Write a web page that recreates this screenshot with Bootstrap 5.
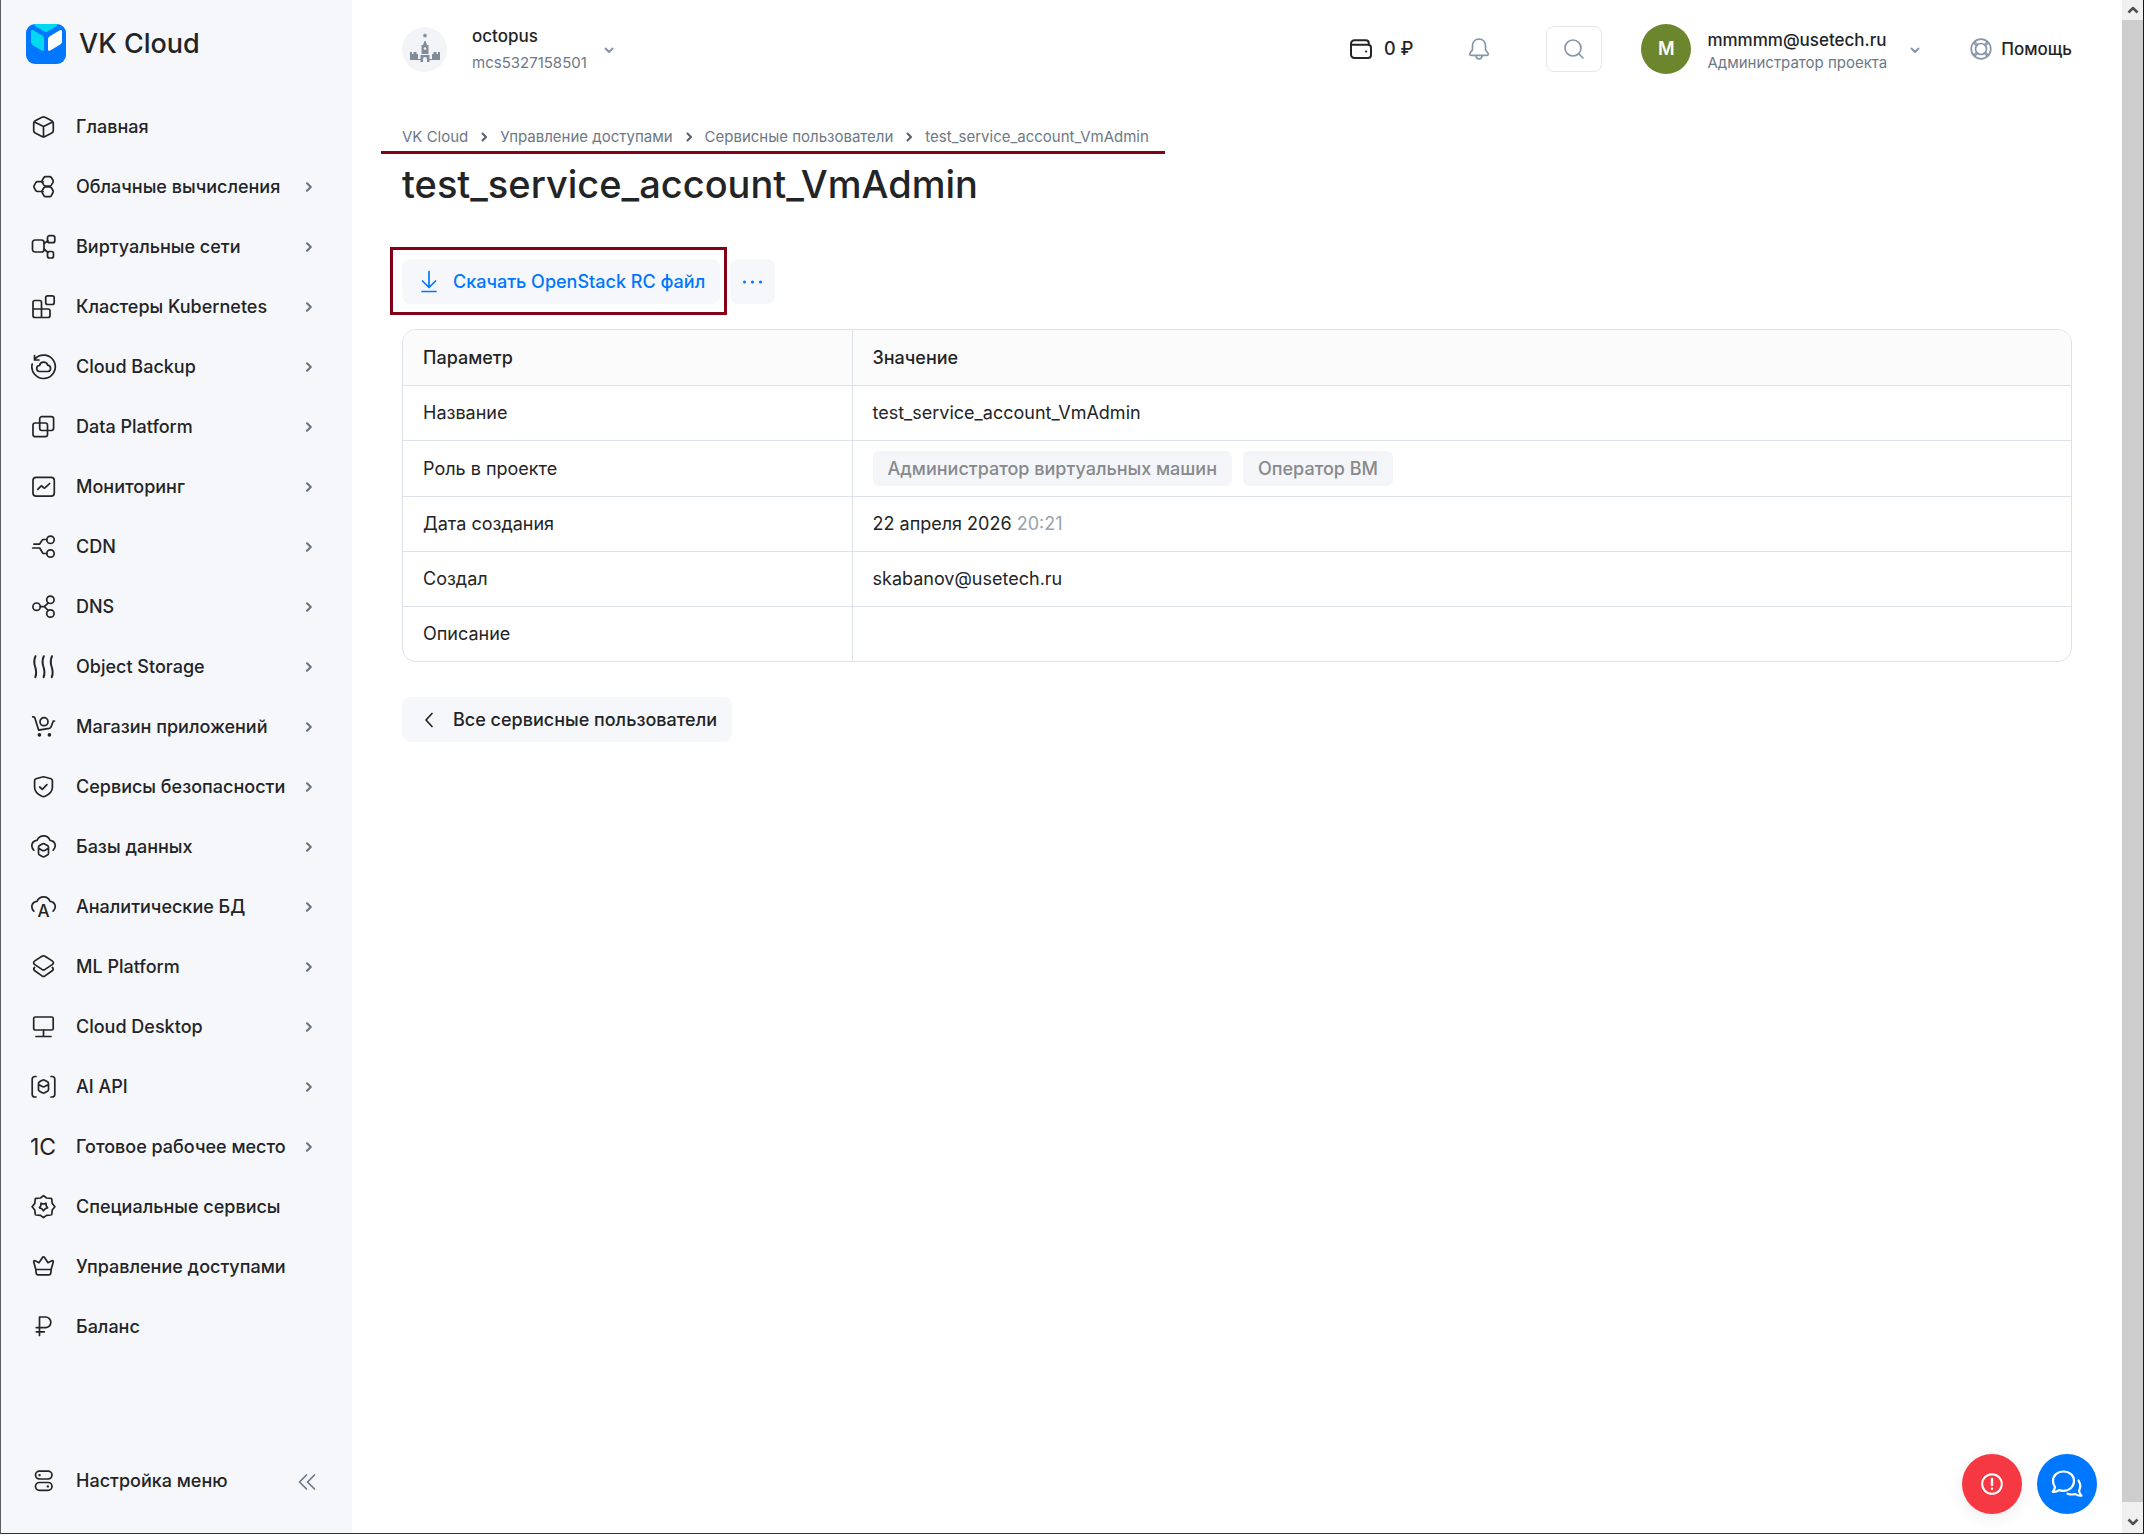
<!DOCTYPE html>
<html lang="ru">
<head>
<meta charset="utf-8">
<meta name="viewport" content="width=device-width, initial-scale=1">
<title>VK Cloud</title>
<link href="https://cdn.jsdelivr.net/npm/bootstrap@5.3.0/dist/css/bootstrap.min.css" rel="stylesheet">
<style>
body{font-family:Inter,"Noto Sans",sans-serif;font-size:18px;line-height:24px;color:#232426;background:#fff}
a{color:inherit;text-decoration:none}
svg{flex:none;fill:none;stroke:currentColor;stroke-width:1.7;stroke-linecap:round;stroke-linejoin:round}
.shell{min-height:calc(100vh - 1px);border-left:1px solid #5a5d63;border-right:1px solid #16181c;border-bottom:1px solid #1d3553}
.side{width:351px;background:#f5f7fb}
.brand{padding:24px 25px 33px;gap:13px;font-size:27px;line-height:40px;font-weight:500}
.side .nav-link{height:60px;padding:0 39px 0 30px;font-size:18px;font-weight:500;color:#232426;white-space:nowrap}
.side .nav-link>svg:first-child{margin-right:19px}
.side .nav-link .arr{margin-left:auto;color:#66717e;stroke-width:2}
.side-foot{padding:0 36px 22px 30px;gap:19px;font-weight:500}
.side-foot button,.plain{border:0;background:none;padding:0;color:inherit;font-weight:500}
.side-foot .muted-c,.muted-c{color:#6d7885}
.plain.icon-c,.icon-c{color:#8795a9}
.thick{stroke-width:2}
.topbar{height:98px;padding:0 50px}
.proj-pic{width:45px;height:45px;background:#f2f4f8;color:#818c99}
.proj-text{margin-left:25px}
.name-line{font-size:17px;line-height:24px;font-weight:500}
.sub-line{font-size:15px;line-height:22px;color:#6d7885}
.user-text{margin-left:16px;padding-top:4px}
.wallet{gap:10px;font-weight:500}
.bell{margin-left:53px}
.search-btn{margin-left:54px;width:56px;height:46px;border:1px solid #e4e6e9;border-radius:8px;background:#fff}
.ava{margin-left:39px;width:50px;height:50px;background:#6c862e;color:#fff;font-weight:600}
.user-arrow{margin-left:22px}
.help-link{gap:9px;margin-left:49px;font-size:17px;font-weight:500}
.content{padding:28px 50px 0}
.crumbs{position:relative;gap:13px;font-size:15px;line-height:22px;color:#6d7885;width:max-content}
.crumbs::after{content:"";position:absolute;left:-21px;right:-16px;top:25px;height:3px;background:#850014}
.crumbs svg{stroke-width:2;color:#55606d}
.page-title{font-size:38px;line-height:48px;font-weight:500;margin:12px 0 51px}
.soft{height:45px;border:0;border-radius:8px;background:#f5f7fb;font-weight:500;padding:0 15px 0 16px;gap:13px}
.soft.dots{padding:0 12px}
.actions{gap:10px}
.blue{color:#0077ff}
.framed{position:relative}
.framed::after{content:"";position:absolute;inset:-12px -7px -11px -12px;border:3px solid #850014;pointer-events:none}
.params{border:1px solid #dce1ea;border-radius:14px;overflow:hidden;margin:25px 0 35px}
.params table{table-layout:fixed;width:100%}
.params th,.params td{height:55px;padding:1px 20px 0;vertical-align:middle;border-bottom:1px solid #dce1ea;font-weight:400}
.params tr>:first-child{width:449px;border-right:1px solid #dce1ea}
.params thead th{background:#fbfbfc;font-weight:500}
.params .tall>*{height:56px}
.params tbody tr:last-child>*{border-bottom:0}
.tags{gap:11px}
.tagx{background:#f4f5f8;color:#87898d;border-radius:6px;padding:5px 15px;font-weight:500;line-height:25px}
.time-c{color:#99a2ad}
.fabs{position:fixed;right:47px;bottom:21px;gap:15px}
.fabs button{width:60px;height:60px;border:0;color:#fff}
.fab-red{background:#f53842;box-shadow:0 4px 16px rgba(0,0,0,.08)}
.fab-blue{background:#0077ff}
.scr{width:21px;background:#cdcdcd;color:#505050}
.scr svg{stroke-width:2.500;stroke-linecap:butt}
.scr div{height:20px;background:#f0f0f0}
.scr div:last-child{height:31px}
</style>
</head>
<body>
<div class="shell d-flex">
<aside class="side d-flex flex-column flex-shrink-0">
  <a href="#" class="brand d-flex align-items-center">
    <svg width="40" height="40" viewBox="0 0 40 40"><rect width="40" height="40" rx="9" fill="#07f" stroke="none"/><path stroke="none" fill="#00d9f0" d="M8.500 0h23c0 1.500-.6 2-2 2.800l-8 4.600c-1.200.7-1.900.7-3.100 0l-8-4.600C9 2 8.500 1.500 8.500 0ZM5 7.500c0-1.500.9-2 2.200-1.200l8.600 5c1.600 1 2.200 1.900 2.200 3.600v10.300c0 1.500-.9 2-2.200 1.200l-8.600-5C5.600 20.400 5 19.500 5 17.800Z"/><path stroke="none" fill="#fff" d="M36 7.500c0-1.500-.9-2-2.200-1.200l-9.600 5.600c-1.600 1-2.200 1.900-2.200 3.600v9.700c0 1.500.9 2 2.200 1.200l9.600-5.600c1.600-1 2.200-1.900 2.200-3.600Z"/></svg>
    <span>VK Cloud</span>
  </a>
  <nav class="nav flex-column flex-nowrap">
    <a class="nav-link d-flex align-items-center" href="#"><svg width="26" height="26" viewBox="0 0 26 26"><path d="M11 3.200a3 3 0 0 1 3 0l6.800 3.500a3 3 0 0 1 1.500 2.600v7.200a3 3 0 0 1-1.500 2.600L14 22.400a3 3 0 0 1-3 0l-6.800-3.300a3 3 0 0 1-1.500-2.600V9.300a3 3 0 0 1 1.500-2.600ZM3.500 8l9 4.600 9-4.600M12.500 12.600v10"/></svg>Главная</a>
    <a class="nav-link d-flex align-items-center" href="#"><svg width="26" height="26" viewBox="0 0 26 26"><path d="M14.500 2.600h4.200a2 2 0 0 1 1.600.9l1.700 2.800a2 2 0 0 1 0 2l-1.700 2.800a2 2 0 0 1-1.600.9h-4.200a2 2 0 0 1-1.600-.9l-1.700-2.800a2 2 0 0 1 0-2l1.700-2.800a2 2 0 0 1 1.600-.9Z"/><path d="M14.500 12.800h4.200a2 2 0 0 1 1.600.9l1.700 2.800a2 2 0 0 1 0 2l-1.700 3.200a2 2 0 0 1-1.600.9h-4.200a2 2 0 0 1-1.600-.9l-1.700-3.200a2 2 0 0 1 0-2l1.700-2.800a2 2 0 0 1 1.600-.9ZM12 7.700H6.500a2 2 0 0 0-1.700 1l-1.700 2.900a2 2 0 0 0 0 2l1.700 2.900a2 2 0 0 0 1.700 1H12"/></svg>Облачные вычисления<svg class="arr" width="8" height="12" viewBox="0 0 8 12"><path d="m2 2.200 3.800 3.800-3.800 3.800"/></svg></a>
    <a class="nav-link d-flex align-items-center" href="#"><svg width="26" height="26" viewBox="0 0 26 26"><rect x="1.500" y="6" width="11.500" height="12" rx="2.500"/><rect x="16.500" y="1.700" width="7.300" height="7" rx="2"/><rect x="16.500" y="17.500" width="6" height="6.500" rx="2"/><path d="m13 9.500 4-2.800M13 15l4 3.500"/></svg>Виртуальные сети<svg class="arr" width="8" height="12" viewBox="0 0 8 12"><path d="m2 2.200 3.800 3.800-3.800 3.800"/></svg></a>
    <a class="nav-link d-flex align-items-center" href="#"><svg width="26" height="26" viewBox="0 0 26 26"><path d="M10.500 15V8.500a2 2 0 0 0-2-2H4a2 2 0 0 0-2 2v13a2 2 0 0 0 2 2h13a2 2 0 0 0 2-2V17a2 2 0 0 0-2-2H2M10.500 15v8.500"/><rect x="14.700" y="1.800" width="8.500" height="8.700" rx="2"/></svg>Кластеры Kubernetes<svg class="arr" width="8" height="12" viewBox="0 0 8 12"><path d="m2 2.200 3.800 3.800-3.800 3.800"/></svg></a>
    <a class="nav-link d-flex align-items-center" href="#"><svg width="26" height="26" viewBox="0 0 26 26"><path d="M1.200 10A11.700 11.700 0 1 0 4 4.800M3.500 1.500V6H8M9 17.500a3 3 0 0 1-.5-6 4.300 4.300 0 0 1 8.300-.3 3.200 3.200 0 0 1 .2 6.300Z"/></svg>Cloud Backup<svg class="arr" width="8" height="12" viewBox="0 0 8 12"><path d="m2 2.200 3.800 3.800-3.800 3.800"/></svg></a>
    <a class="nav-link d-flex align-items-center" href="#"><svg width="26" height="26" viewBox="0 0 26 26"><rect x="2" y="9" width="14.500" height="13.700" rx="2.200"/><rect x="8.700" y="2.600" width="13.900" height="13.900" rx="2.200"/></svg>Data Platform<svg class="arr" width="8" height="12" viewBox="0 0 8 12"><path d="m2 2.200 3.800 3.800-3.800 3.800"/></svg></a>
    <a class="nav-link d-flex align-items-center" href="#"><svg width="26" height="26" viewBox="0 0 26 26"><rect x="2" y="3.400" width="21.300" height="18.800" rx="3.200"/><path d="m6.800 15.300 2.900-3c.5-.5 1-.5 1.500 0l1.300 1.400c.6.500 1.100.5 1.700 0l4.500-4.200"/></svg>Мониторинг<svg class="arr" width="8" height="12" viewBox="0 0 8 12"><path d="m2 2.200 3.800 3.800-3.800 3.800"/></svg></a>
    <a class="nav-link d-flex align-items-center" href="#"><svg width="26" height="26" viewBox="0 0 26 26"><circle cx="19.500" cy="5.800" r="3.700"/><circle cx="19.500" cy="19.500" r="3.700"/><path d="M3 10.200h5.500L11.300 6c.3-.4.7-.5 1.200-.5h3.300M1.700 14h7l3 5c.3.400.7.500 1.200.5h2.900"/></svg>CDN<svg class="arr" width="8" height="12" viewBox="0 0 8 12"><path d="m2 2.200 3.800 3.800-3.800 3.800"/></svg></a>
    <a class="nav-link d-flex align-items-center" href="#"><svg width="26" height="26" viewBox="0 0 26 26"><circle cx="5.600" cy="12.700" r="3.700"/><circle cx="19.400" cy="5.800" r="3.700"/><circle cx="19.400" cy="19.500" r="3.700"/><path d="M9.300 12.700h4l4-3.800M13.300 12.700l4 3.800"/></svg>DNS<svg class="arr" width="8" height="12" viewBox="0 0 8 12"><path d="m2 2.200 3.800 3.800-3.800 3.800"/></svg></a>
    <a class="nav-link d-flex align-items-center" href="#"><svg width="26" height="26" viewBox="0 0 26 26"><path d="M4.500 2.200C2.700 6 3 9 4 12.300c1.200 3.500 1.900 7 .3 10.900M12.800 2.200C11 6 11.300 9 12.300 12.300c1.200 3.500 1.900 7 .3 10.900M21 2.200C19.200 6 19.500 9 20.500 12.300c1.200 3.500 1.900 7 .3 10.900" stroke-width="2"/></svg>Object Storage<svg class="arr" width="8" height="12" viewBox="0 0 8 12"><path d="m2 2.200 3.800 3.800-3.800 3.800"/></svg></a>
    <a class="nav-link d-flex align-items-center" href="#"><svg width="26" height="26" viewBox="0 0 26 26"><path d="M1.700 2.800h.9c.7 0 1 .3 1.200 1l3.800 12.300 10.700-1.700c1-.2 1.400-.6 1.700-1.400l2.300-6h1.200"/><circle cx="13" cy="7.700" r="4"/><circle cx="8.400" cy="20.800" r="1" fill="currentColor"/><circle cx="18.400" cy="20.800" r="1" fill="currentColor"/></svg>Магазин приложений<svg class="arr" width="8" height="12" viewBox="0 0 8 12"><path d="m2 2.200 3.800 3.800-3.800 3.800"/></svg></a>
    <a class="nav-link d-flex align-items-center" href="#"><svg width="26" height="26" viewBox="0 0 26 26"><path d="M11.300 3a4 4 0 0 1 2.400 0l6.300 1.800c1 .3 1.400.9 1.400 1.900v6.500c0 4-2.600 6.800-7.200 9a4 4 0 0 1-3.400 0c-4.600-2.200-7.200-5-7.200-9V6.700c0-1 .4-1.600 1.400-1.900ZM8.700 13l2.600 2.300 4.600-4.600"/></svg>Сервисы безопасности<svg class="arr" width="8" height="12" viewBox="0 0 8 12"><path d="m2 2.200 3.800 3.800-3.800 3.800"/></svg></a>
    <a class="nav-link d-flex align-items-center" href="#"><svg width="26" height="26" viewBox="0 0 26 26"><path d="M2.800 16.200C-.7 12.500.7 6.800 6 6.300c2.800-6 10.700-6 13 0 5.400.5 6.800 6.200 3.200 9.900M11.300 10a2.500 2.500 0 0 1 2.400 0l2.700 1.500c.7.400 1.100 1 1.100 1.900v5.800c0 .9-.4 1.500-1.100 1.900l-2.700 1.500a2.500 2.500 0 0 1-2.400 0l-2.700-1.500c-.7-.4-1.100-1-1.100-1.900v-5.800c0-.9.400-1.500 1.100-1.900ZM8 14.500l3.300 1.900a2.500 2.500 0 0 0 2.400 0l3.300-1.900"/></svg>Базы данных<svg class="arr" width="8" height="12" viewBox="0 0 8 12"><path d="m2 2.200 3.800 3.800-3.800 3.800"/></svg></a>
    <a class="nav-link d-flex align-items-center" href="#"><svg width="26" height="26" viewBox="0 0 26 26"><path d="M2.800 17.200C-.7 13.500.7 7.800 6 7.300c2.800-6 10.700-6 13 0 5.400.5 6.800 6.200 3.200 9.900"/><text x="12.500" y="22.500" text-anchor="middle" font-size="17" font-weight="500" fill="currentColor" stroke="none">A</text></svg>Аналитические БД<svg class="arr" width="8" height="12" viewBox="0 0 8 12"><path d="m2 2.200 3.800 3.800-3.800 3.800"/></svg></a>
    <a class="nav-link d-flex align-items-center" href="#"><svg width="26" height="26" viewBox="0 0 26 26"><path d="M11 2.300a3 3 0 0 1 3 0l7.200 4.600c1.600 1 1.600 2.700 0 3.700L14 15.400a3 3 0 0 1-3 0l-7.200-4.800c-1.600-1-1.600-2.700 0-3.700ZM3.600 13.500c-1.200 1-1.100 2.300.2 3.200L11 21.900a3 3 0 0 0 3 0l7.200-5.200c1.300-.9 1.400-2.200.2-3.200"/></svg>ML Platform<svg class="arr" width="8" height="12" viewBox="0 0 8 12"><path d="m2 2.200 3.800 3.800-3.800 3.800"/></svg></a>
    <a class="nav-link d-flex align-items-center" href="#"><svg width="26" height="26" viewBox="0 0 26 26"><rect x="2.700" y="3" width="19.500" height="13" rx="1.500"/><path d="M12.500 16v6.500M5 22.500h15"/></svg>Cloud Desktop<svg class="arr" width="8" height="12" viewBox="0 0 8 12"><path d="m2 2.200 3.800 3.800-3.800 3.800"/></svg></a>
    <a class="nav-link d-flex align-items-center" href="#"><svg width="26" height="26" viewBox="0 0 26 26"><path d="M5 2.500H4A2.800 2.800 0 0 0 1.200 5.300v14.900A2.800 2.800 0 0 0 4 23h1M20 2.500h1a2.800 2.800 0 0 1 2.800 2.800v14.900A2.800 2.800 0 0 1 21 23h-1M11.300 6.200a2.500 2.500 0 0 1 2.400 0l2.700 1.500c.7.400 1.100 1 1.100 1.900v5.800c0 .9-.4 1.500-1.100 1.900l-2.700 1.500a2.500 2.500 0 0 1-2.400 0l-2.700-1.500c-.7-.4-1.100-1-1.100-1.900V9.600c0-.9.400-1.500 1.100-1.900ZM8 10.700l3.300 1.900a2.500 2.500 0 0 0 2.400 0l3.300-1.900"/></svg>AI API<svg class="arr" width="8" height="12" viewBox="0 0 8 12"><path d="m2 2.200 3.800 3.800-3.800 3.800"/></svg></a>
    <a class="nav-link d-flex align-items-center" href="#"><svg width="26" height="26" viewBox="0 0 26 26"><text x="12" y="21" text-anchor="middle" font-size="23" font-weight="400" fill="currentColor" stroke="none">1С</text></svg>Готовое рабочее место<svg class="arr" width="8" height="12" viewBox="0 0 8 12"><path d="m2 2.200 3.800 3.800-3.800 3.800"/></svg></a>
    <a class="nav-link d-flex align-items-center" href="#"><svg width="26" height="26" viewBox="0 0 26 26"><path d="m12.500 1.700 3 2.300 4.500.4c.6.100.7.300.8.800l.4 4.200 2.700 3.300-2.700 3.300-.4 4.200c-.1.500-.2.700-.8.800l-4.500.4-3 2.300-3-2.300-4.500-.4c-.6-.1-.7-.3-.8-.8L3.800 16l-2.700-3.300 2.700-3.300.4-4.200c.1-.5.200-.7.800-.8L9.500 4ZM10 9.200l2.500.8 2.500-.8.200 2.600 1.400 1.900-2.400 1.100-1.700 2-1.700-2-2.400-1.100 1.400-1.900Z"/></svg>Специальные сервисы</a>
    <a class="nav-link d-flex align-items-center" href="#"><svg width="26" height="26" viewBox="0 0 26 26"><path d="M4.700 15 2.800 8.200c-.4-1.400.6-2 1.800-1.300L8 8.700l3.300-5c.8-1.200 1.600-1.200 2.400 0l3.300 5 3.400-1.800c1.200-.7 2.200-.1 1.800 1.300L20.300 15l-.5 4c-.1 1.200-.8 1.800-2 1.800H7.200c-1.200 0-1.900-.6-2-1.800ZM5 15.500h15"/></svg>Управление доступами</a>
    <a class="nav-link d-flex align-items-center" href="#"><svg width="26" height="26" viewBox="0 0 26 26"><path d="M8.500 21.500V3h6a5 5 0 0 1 0 10.700H5.300M5.300 17.800h8"/></svg>Баланс</a>
  </nav>
  <div class="side-foot d-flex align-items-center mt-auto">
    <svg width="26" height="60" viewBox="0 -17 26 60"><rect x="4.500" y="3.200" width="16.500" height="7.800" rx="3.900"/><rect x="4.500" y="14.500" width="16.500" height="7.800" rx="3.900"/><path d="M8.500 7.100h.1M16.800 18.400h.1" stroke-width="2.400"/></svg>
    <button type="button">Настройка меню</button>
    <button type="button" class="ms-auto lh-1 muted-c" aria-label="Свернуть"><svg width="18" height="18" viewBox="0 0 18 18"><path d="M8.500 2 1.500 9l7 7M16.500 2l-7 7 7 7"/></svg></button>
  </div>
</aside>
<main class="flex-grow-1 d-flex flex-column">
  <header class="topbar d-flex align-items-center">
    <div class="d-flex align-items-center">
      <span class="proj-pic rounded-circle d-flex align-items-center justify-content-center"><svg width="32" height="32" viewBox="0 0 32 32"><path stroke="none" fill="currentColor" d="m16 0 .8 1.500 1.700.2-1.200 1.300.3 1.700-1.600-.8-1.600.8.300-1.700-1.200-1.300 1.700-.2ZM15.500 8h1l1.500 4h1.500v9h-7v-9H14ZM1 19h2v2h1.500v-2h3v2H9v5h2.500v-4h9v4H23v-5h1.500v-2h3v2H29v-2h2v8H20.500v2h-2.500v-3a2 2 0 0 0-4 0v3h-2.500v-2H1Z"/><circle cx="16" cy="15.500" r="1.300" fill="#f2f4f8" stroke="none"/></svg></span>
      <div class="proj-text"><div class="name-line">octopus</div><div class="sub-line pt-1">mcs5327158501</div></div>
      <button type="button" class="plain ms-3 icon-c lh-1" aria-label="Выбрать проект"><svg class="thick" width="12" height="12" viewBox="0 0 12 12"><path d="m2.500 4.500 3.500 3.500 3.500-3.500"/></svg></button>
    </div>
    <div class="d-flex align-items-center ms-auto">
      <a href="#" class="wallet d-flex align-items-center"><svg class="thick" width="26" height="26" viewBox="0 0 26 26"><path d="M20.800 8.700V7.200a3 3 0 0 0-3-3H6.500A3.500 3.500 0 0 0 3 7.700v10.800A3.500 3.500 0 0 0 6.500 22H20a3 3 0 0 0 3-3v-7.200a3 3 0 0 0-3-3H3.500M18 15.500h.2"/></svg><span>0 ₽</span></a>
      <button type="button" class="plain bell icon-c lh-1" aria-label="Уведомления"><svg width="26" height="26" viewBox="0 0 26 26"><path d="M13 3.200c-4 0-6.500 2.800-6.500 6.500v4L4 17.200c-.7 1.100-.2 2.100 1.100 2.100h15.800c1.300 0 1.800-1 1.100-2.100l-2.500-3.500v-4c0-3.700-2.500-6.500-6.500-6.500ZM10 20.500c.4 1.500 1.500 2.400 3 2.400s2.600-.9 3-2.400"/></svg></button>
      <button type="button" class="search-btn icon-c d-flex align-items-center justify-content-center" aria-label="Поиск"><svg width="22" height="22" viewBox="0 0 22 22"><circle cx="10" cy="10" r="8"/><path d="m16 16 4 4"/></svg></button>
      <span class="ava rounded-circle d-flex align-items-center justify-content-center">M</span>
      <div class="user-text"><div class="name-line">mmmmm@usetech.ru</div><div class="sub-line">Администратор проекта</div></div>
      <button type="button" class="plain user-arrow icon-c lh-1" aria-label="Профиль"><svg class="thick" width="12" height="12" viewBox="0 0 12 12"><path d="m2.500 4.500 3.500 3.500 3.500-3.500"/></svg></button>
      <a href="#" class="help-link d-flex align-items-center"><svg class="icon-c" width="22" height="22" viewBox="0 0 22 22"><circle cx="11" cy="11" r="9.800"/><circle cx="11" cy="11" r="5.500"/><path d="m4.500 3.500 3 3M3.500 4.800l3 3M17.500 3.500l-3 3M18.500 4.800l-3 3M4.500 18.500l3-3M3.500 17.200l3-3M17.500 18.500l-3-3M18.500 17.200l-3-3" stroke-width="1.300"/></svg>Помощь</a>
    </div>
  </header>
  <div class="content">
    <nav class="crumbs d-flex align-items-center" aria-label="breadcrumb">
      <a href="#">VK Cloud</a><svg width="6" height="12" viewBox="0 0 6 12"><path d="m1.500 2.500 3.500 3.500-3.500 3.500"/></svg><a href="#">Управление доступами</a><svg width="6" height="12" viewBox="0 0 6 12"><path d="m1.500 2.500 3.500 3.500-3.500 3.500"/></svg><a href="#">Сервисные пользователи</a><svg width="6" height="12" viewBox="0 0 6 12"><path d="m1.500 2.500 3.500 3.500-3.500 3.500"/></svg><span>test_service_account_VmAdmin</span>
    </nav>
    <h1 class="page-title">test_service_account_VmAdmin</h1>
    <div class="actions d-flex">
      <div class="framed"><button type="button" class="soft blue d-flex align-items-center"><svg width="22" height="26" viewBox="0 0 22 26"><path d="M11 2.500v15M4.500 12l6.500 6.500 6.500-6.500M4 22.500h14"/></svg>Скачать OpenStack RC файл</button></div>
      <button type="button" class="soft dots blue d-flex align-items-center justify-content-center" aria-label="Ещё"><svg width="21" height="6" viewBox="0 0 21 6"><path d="M2.500 3h.01M10.500 3h.01M18.500 3h.01" stroke-width="3"/></svg></button>
    </div>
    <div class="params">
      <table>
        <thead><tr><th scope="col">Параметр</th><th scope="col">Значение</th></tr></thead>
        <tbody>
          <tr><th scope="row">Название</th><td>test_service_account_VmAdmin</td></tr>
          <tr class="tall"><th scope="row">Роль в проекте</th><td><div class="tags d-flex"><span class="tagx">Администратор виртуальных машин</span><span class="tagx">Оператор ВМ</span></div></td></tr>
          <tr><th scope="row">Дата создания</th><td>22 апреля 2026 <span class="time-c">20:21</span></td></tr>
          <tr><th scope="row">Создал</th><td>skabanov@usetech.ru</td></tr>
          <tr><th scope="row">Описание</th><td></td></tr>
        </tbody>
      </table>
    </div>
    <a href="#" class="soft d-inline-flex align-items-center"><svg width="22" height="22" viewBox="0 0 22 22"><path d="m14 4.500-6 6.500 6 6.500"/></svg>Все сервисные пользователи</a>
  </div>
</main>
<div class="scr d-flex flex-column justify-content-between flex-shrink-0" aria-hidden="true">
  <div class="d-flex align-items-center justify-content-center"><svg width="12" height="10" viewBox="0 0 12 10"><path d="M1.500 7.500 6 3l4.500 4.500"/></svg></div>
  <div class="d-flex align-items-center justify-content-center pt-2"><svg width="12" height="10" viewBox="0 0 12 10"><path d="M1.500 2.500 6 7l4.500-4.500"/></svg></div>
</div>
</div>
<div class="fabs d-flex">
  <button type="button" class="fab-red rounded-circle d-flex align-items-center justify-content-center" aria-label="Сообщить о проблеме"><svg class="thick" width="24" height="24" viewBox="0 0 24 24"><circle cx="12" cy="12" r="9.800"/><path d="M12 7v6M12 16.600v.1" stroke-width="2.400"/></svg></button>
  <button type="button" class="fab-blue rounded-circle d-flex align-items-center justify-content-center" aria-label="Чат"><svg width="34" height="30" viewBox="0 0 34 30"><path stroke-width="2.200" d="M13.500 2.500C7.500 2.500 3 6.500 3 12c0 2.500.9 4.500 2 6.200-.2 1.800-.8 3-2.300 4.600 2.600.3 4.700-.5 6.300-1.700 1.500.5 3 .7 4.500.7 6 0 10.500-4.300 10.500-9.800s-4.500-9.500-10.500-9.500ZM28.500 11.500c1.700 2.600 2.300 6.700.5 10.200.2 2 .8 3.300 2.500 5-2.500.3-4.500-.3-6.200-1.700-2.500.8-5 .7-7.800-.3"/></svg></button>
</div>
<script src="https://cdn.jsdelivr.net/npm/bootstrap@5.3.0/dist/js/bootstrap.bundle.min.js"></script>
</body>
</html>
